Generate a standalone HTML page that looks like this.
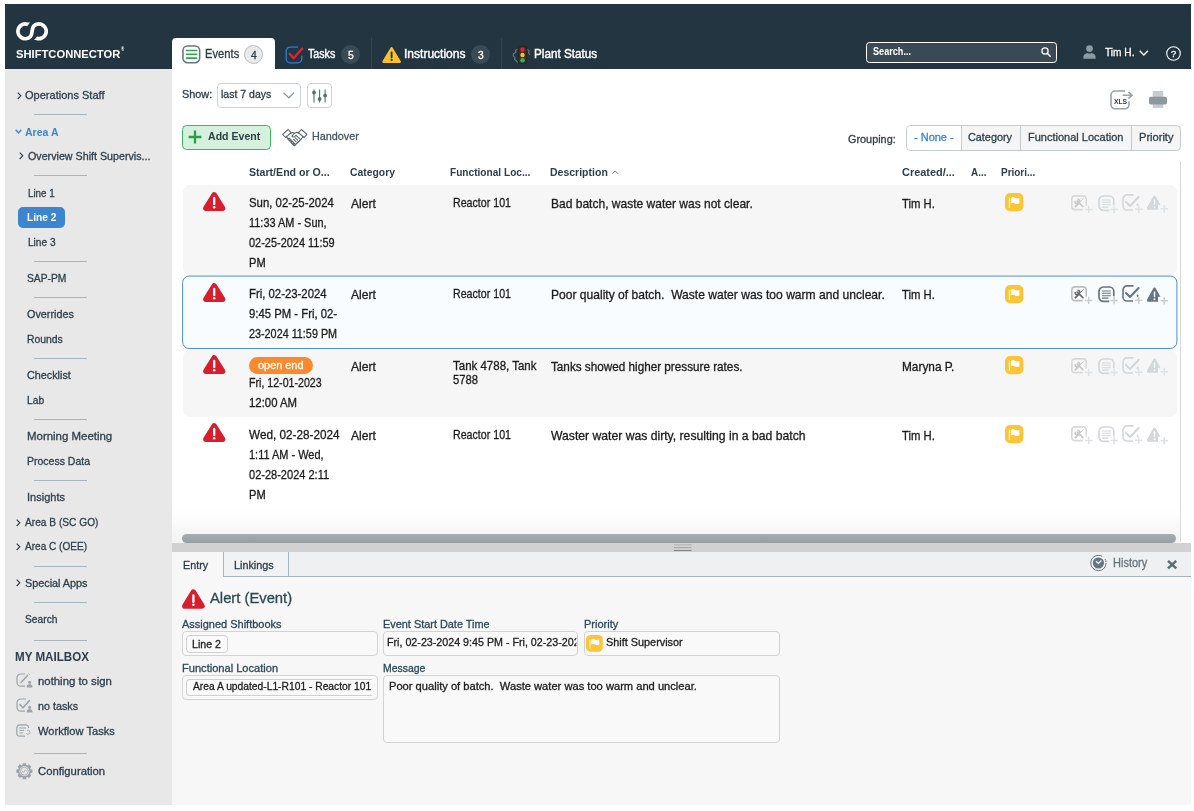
<!DOCTYPE html>
<html lang="en"><head><meta charset="utf-8"><title>Shiftconnector</title>
<style>
*{box-sizing:border-box;margin:0;padding:0}
html,body{width:1194px;height:811px;overflow:hidden;background:#fff}
body{font-family:"Liberation Sans",sans-serif;position:relative;color:#2c3e4a}
.a{position:absolute}
.t{position:absolute;white-space:nowrap;display:inline-block;transform-origin:0 50%;-webkit-text-stroke:0.3px currentColor}
svg{position:absolute;overflow:visible}
#hdr{left:5px;top:4px;width:1186px;height:64.5px;background:#223540}
#side{left:5px;top:68.5px;width:167.2px;height:736.5px;background:#e8e8e8}
.sep{position:absolute;left:34px;width:52.5px;height:1px;background:#a9b5bd}
#tabEv{left:172.2px;top:38px;width:102.8px;height:31px;background:#fff;border-radius:4px 4px 0 0}
.hsep{position:absolute;top:38px;width:1px;height:30.5px;background:#33464f}
.badge{position:absolute;width:19px;height:19px;border-radius:50%}
#srch{left:865.5px;top:42px;width:191px;height:20.5px;border:1px solid #fff;border-radius:3.5px;background:#3a4a54}
.btn{position:absolute;border:1px solid #c9cfd3;border-radius:4px;background:#fff}
.row{position:absolute;left:183px;width:994px;border-radius:7px}
.fld{position:absolute;border:1px solid #d3d3d3;border-radius:4px;background:#f9f9f9}
.chip{position:absolute;border:1px solid #d0d0d0;border-radius:4px;background:#fafafa}
#texts{position:absolute;left:0;top:0;width:1194px;height:811px;will-change:transform}

</style></head>
<body>
<div class="a" id="hdr"></div>
<div class="a" id="side"></div>
<!-- logo -->
<svg style="left:15.8px;top:21.5px" width="32.2" height="18.6" viewBox="0 0 32.2 18.6"><path d="M11.93 2.44A7.35 7.35 0 1 0 14.50 14.50C16.90 12.09 15.30 6.51 17.70 4.10A7.35 7.35 0 1 1 20.27 16.16" fill="none" stroke="#fff" stroke-width="3.8"/><path d="M10.95 4.21L12.16 0.50L14.10 0.50Z" fill="#fff"/><path d="M21.25 14.39L20.04 18.10L18.10 18.10Z" fill="#fff"/></svg>
<!-- header tabs -->
<div class="a" id="tabEv"></div>
<svg style="left:182.3px;top:45.1px" width="18.6" height="18.6" viewBox="0 0 18 18"><rect x="0.9" y="0.9" width="16.2" height="16.2" rx="4.4" fill="#fff" stroke="#687681" stroke-width="1.5"/><g stroke="#2fa84f" stroke-width="1.6" stroke-linecap="round"><path d="M4.4 5.3H14.2M4.4 9H14.2M4.4 12.7H14.2"/></g></svg>
<div class="badge" style="left:244.2px;top:44.7px;background:#e9e9e9;border:1px solid #b9bfc3"></div>
<svg style="left:285px;top:45.5px" width="19" height="18" viewBox="0 0 19 18"><path d="M13 1.2H5.2A4 4 0 0 0 1.2 5.2V12.8A4 4 0 0 0 5.2 16.8H12.8A4 4 0 0 0 16.8 12.8V9.5" fill="none" stroke="#2f7fd1" stroke-width="1.3"/><path d="M4.6 7.8L8.6 12.2L17.2 2.6" fill="none" stroke="#e0202f" stroke-width="2.4" stroke-linejoin="round" stroke-linecap="round"/></svg>
<div class="badge" style="left:341px;top:44.7px;background:#3b4b56"></div>
<div class="hsep" style="left:371px"></div>
<svg style="left:381.6px;top:46.6px" width="19.2" height="16" viewBox="0 0 19.5 16.5"><path d="M9.75 1.2L18.3 15.3H1.2Z" fill="#f9c22e" stroke="#f9c22e" stroke-width="2.2" stroke-linejoin="round"/><path d="M9.75 5.6V10.6" stroke="#223540" stroke-width="1.9" stroke-linecap="round"/><circle cx="9.75" cy="13.3" r="1.15" fill="#223540"/></svg>
<div class="badge" style="left:471.2px;top:44.7px;background:#3b4b56"></div>
<div class="hsep" style="left:501px"></div>
<svg style="left:512px;top:46px" width="19" height="18" viewBox="0 0 19 18"><path d="M5.5 3.2L3.6 4.2L3.9 6.4L1.6 7.4L1.2 9.8L3 11.4L2.6 13.6L4.6 15L5.8 16.6M15.2 3.4L17 4.6L16.6 6.8L17.8 8.6" fill="none" stroke="#6b7a84" stroke-width="1.1"/><rect x="6.3" y="0.4" width="8.4" height="17.2" rx="1.2" fill="#3a2f2c" stroke="#1d1d1d" stroke-width="0.5"/><circle cx="10.5" cy="3.8" r="2.2" fill="#e8212e"/><circle cx="10.5" cy="9" r="2.2" fill="#f7c325"/><circle cx="10.5" cy="14.2" r="2.3" fill="#2fb457"/></svg>
<!-- search -->
<div class="a" id="srch"></div>
<svg style="left:1041.3px;top:46.6px" width="11" height="11" viewBox="0 0 11 11"><circle cx="4" cy="4" r="3.1" fill="none" stroke="#fff" stroke-width="1.25"/><path d="M6.4 6.4L9.2 9.2" stroke="#fff" stroke-width="1.5" stroke-linecap="round"/></svg>
<svg style="left:1083.1px;top:45px" width="13" height="14" viewBox="0 0 13 14"><circle cx="6.5" cy="3.6" r="3.4" fill="#8b9aa4"/><path d="M0.4 13.8V11.6C0.4 9.4 2.6 8.2 4.4 7.9C5.6 8.7 7.4 8.7 8.6 7.9C10.4 8.2 12.6 9.4 12.6 11.6V13.8Z" fill="#8b9aa4"/></svg>
<svg style="left:1139.2px;top:50.4px" width="10" height="6" viewBox="0 0 10 6"><path d="M0.7 0.7L4.8 5L9 0.7" fill="none" stroke="#fff" stroke-width="1.4"/></svg>
<svg style="left:1166px;top:45.5px" width="15" height="15" viewBox="0 0 15 15"><circle cx="7.5" cy="7.5" r="6.8" fill="none" stroke="#fff" stroke-width="1.1"/></svg>
<!-- export icons -->
<svg style="left:1110.3px;top:89.7px" width="23" height="20" viewBox="0 0 23 20"><path d="M15 1H5.2A4.2 4.2 0 0 0 1 5.2V14.6A4.2 4.2 0 0 0 5.2 18.8H14.8A4.2 4.2 0 0 0 19 14.6V11.2" fill="none" stroke="#98a3ab" stroke-width="1.6"/><path d="M12.6 5.2H21.4M18.4 1.8L22 5.2L18.4 8.6" fill="none" stroke="#98a3ab" stroke-width="1.6"/></svg>
<svg style="left:1148.8px;top:90.7px" width="18" height="17.2" viewBox="0 0 18 17.2"><rect x="3.7" y="0" width="10.6" height="17.1" fill="#c5cdd1"/><rect x="0" y="5.7" width="18" height="7.8" rx="1.8" fill="#8b989f"/></svg>
<!-- toolbar -->
<div class="btn" style="left:217px;top:83.2px;width:83.6px;height:25px;border-color:#cfd3d6"></div>
<svg style="left:283px;top:92px" width="12" height="7" viewBox="0 0 12 7"><path d="M0.6 0.8L5.8 5.8L11 0.8" fill="none" stroke="#8b989f" stroke-width="1.2"/></svg>
<div class="btn" style="left:307.2px;top:83.2px;width:24.8px;height:25px;border-color:#cfd3d6"></div>
<svg style="left:312px;top:89px" width="15" height="14" viewBox="0 0 15 14"><g stroke="#5b6b75" stroke-width="1.1"><path d="M2 0.4V13.4M7.6 0.4V13.4M13.1 0.4V13.4"/></g><g fill="#5b6b75"><circle cx="2" cy="3.6" r="1.9"/><circle cx="7.6" cy="10" r="1.9"/><circle cx="13.1" cy="6.6" r="1.9"/></g></svg>
<div class="btn" style="left:182.4px;top:125px;width:88.2px;height:24.6px;background:#d5f0dc;border-color:#3db65f;border-radius:4.5px"></div>
<svg style="left:188.3px;top:129.8px" width="14" height="14" viewBox="0 0 14 14"><path d="M7 0.6V13.4M0.6 7H13.4" stroke="#27a045" stroke-width="2.3"/></svg>
<svg style="left:282px;top:127.5px" width="26" height="19" viewBox="0 0 26 19"><g fill="none" stroke="#56646e" stroke-width="1.05" stroke-linejoin="round" stroke-linecap="round"><path d="M0.6 6.4L6.2 1.5L9.2 4.6L3.6 9.5Z"/><path d="M19.4 1.5L25 6.4L22 9.5L16.4 4.6Z"/><path d="M8 5.6L10.6 4.4L12.6 5.2"/><path d="M17.2 5.4L14.6 4.2L12.4 5.4L9.8 8.2C10.6 9.4 12 9.2 13.2 8L14 7.4L18.6 11.6"/><path d="M4.6 9L6 10.6"/><path d="M21 8.8L18.8 11.6L12.4 17.6"/><path d="M5.9 11.2L7.2 10L8.4 11.3L7.1 12.5ZM7.6 13L9 11.7L10.2 13L8.8 14.3ZM9.3 14.8L10.7 13.5L11.9 14.8L10.5 16.1ZM11 16.6L12.3 15.4L13.4 16.6L12.2 17.8Z"/><path d="M13.4 16.4L14.6 15.4M15 15L16.2 14M16.6 13.6L17.8 12.6"/><path d="M13 9.6L15.6 12.2M11.6 11.2L14 13.6"/></g></svg>
<!-- grouping -->
<div class="btn" style="left:906px;top:125px;width:274.8px;height:26.4px;background:#f5f5f5;border-color:#c3cbd0;border-radius:4.5px"></div>
<div class="a" style="left:907px;top:126px;width:53.5px;height:24.4px;background:#fff;border-radius:3.5px 0 0 3.5px"></div>
<div class="a" style="left:960.5px;top:126px;width:1px;height:24.4px;background:#c3cbd0"></div>
<div class="a" style="left:1020px;top:126px;width:1px;height:24.4px;background:#c3cbd0"></div>
<div class="a" style="left:1131px;top:126px;width:1px;height:24.4px;background:#c3cbd0"></div>
<!-- list right border -->
<div class="a" style="left:1180.2px;top:161px;width:1px;height:381px;background:#d9d9d9"></div>
<!-- rows -->
<div class="row" style="top:185px;height:89.5px;background:#f6f6f6"></div>
<div class="row" style="top:350px;height:67px;background:#f6f6f6"></div>
<svg style="left:0;top:0" width="1194" height="360" viewBox="0 0 1194 360"><rect x="182.6" y="276.05" width="994.3" height="72.45" rx="6.5" fill="#f8fcfe" stroke="#4a8fd3" stroke-width="1"/></svg>
<!-- shadow above scrollbar -->
<div class="a" style="left:172.2px;top:506px;width:1008px;height:37px;background:linear-gradient(#fff,#fdfdfd 30%,#f5f5f5 78%,#f4f4f4)"></div>
<!-- splitter + bottom panel -->
<div class="a" style="left:172.2px;top:543px;width:1018.6px;height:262px;background:#f7f7f7"></div>
<div class="a" style="left:172.2px;top:543px;width:1018.6px;height:9px;background:#d1d1d1"></div>
<div class="a" style="left:182px;top:534px;width:994.2px;height:9px;border-radius:4.5px;background:linear-gradient(#a6adb0,#979fa3)"></div>
<svg style="left:673.5px;top:544px" width="17.5" height="8" viewBox="0 0 17.5 8"><path d="M0 0.8H17.5" stroke="#b4b4b4" stroke-width="1"/><path d="M0 3.6H17.5" stroke="#a3a3a3" stroke-width="1"/><path d="M0 6.5H17.5" stroke="#858585" stroke-width="1"/></svg>
<div class="a" style="left:172.2px;top:552px;width:1018.6px;height:25px;background:#eef0f1;border-bottom:1px solid #a9b5bd"></div>
<div class="a" style="left:172.2px;top:552px;width:51.8px;height:25px;background:#f7f7f7;border-right:1px solid #a9b5bd"></div>
<div class="a" style="left:224px;top:552px;width:64.5px;height:24px;background:#f1f2f3;border-right:1px solid #a9b5bd"></div>
<!-- history -->
<svg style="left:1090.3px;top:554.7px" width="17" height="16" viewBox="0 0 17 16"><circle cx="8.4" cy="8" r="7.7" fill="none" stroke="#66757f" stroke-width="1" stroke-dasharray="40 4 3 3"/><circle cx="8.4" cy="8" r="5.6" fill="#66757f"/><path d="M6 6.2L8.4 8.4L11.4 5.6" fill="none" stroke="#eef0f1" stroke-width="1.4"/></svg>
<svg style="left:1166.6px;top:559.9px" width="10.2" height="9.2" viewBox="0 0 10.2 9.2"><path d="M1 0.8L9.2 8.4M9.2 0.8L1 8.4" stroke="#5b6b75" stroke-width="2.5"/></svg>
<!-- fields -->
<div class="fld" style="left:182.2px;top:631.2px;width:195.6px;height:25.2px"></div>
<div class="chip" style="left:186px;top:635.3px;width:41.6px;height:17.5px"></div>
<div class="fld" style="left:383.1px;top:631.2px;width:195.2px;height:25.2px"></div>
<div class="fld" style="left:584.1px;top:631.2px;width:195.5px;height:25.2px"></div>
<div class="fld" style="left:182.2px;top:675.3px;width:195.6px;height:25px"></div>
<div class="chip" style="left:186px;top:679.3px;width:186.4px;height:17.2px;border-right:0;border-radius:4px 0 0 4px"></div>
<div class="fld" style="left:383.1px;top:675.3px;width:396.5px;height:68px"></div>
<div class="sep" style="top:114.1px"></div>
<div class="sep" style="top:174.7px"></div>
<div class="sep" style="top:260.8px"></div>
<div class="sep" style="top:297.4px"></div>
<div class="sep" style="top:358.0px"></div>
<div class="sep" style="top:419.3px"></div>
<div class="sep" style="top:479.9px"></div>
<div class="sep" style="top:566.0px"></div>
<div class="sep" style="top:602.4px"></div>
<div class="sep" style="top:639.5px"></div>
<div class="sep" style="top:752.9px"></div>
<div class="a" style="left:17.5px;top:206.9px;width:47px;height:21.1px;border-radius:5px;background:#3b86cf"></div>
<svg style="left:16.7px;top:91.7px" width="4.6" height="7.6" viewBox="0 0 4.6 7.6"><path d="M0.7 0.6L3.8 3.8L0.7 7" fill="none" stroke="#2c3e4a" stroke-width="1.15"/></svg>
<svg style="left:14.9px;top:129.1px" width="7" height="5" viewBox="0 0 7 5"><path d="M0.7 0.8L3.5 3.9L6.3 0.8" fill="none" stroke="#3b86cf" stroke-width="1.4"/></svg>
<svg style="left:19.3px;top:152.1px" width="4.6" height="7.6" viewBox="0 0 4.6 7.6"><path d="M0.7 0.6L3.8 3.8L0.7 7" fill="none" stroke="#2c3e4a" stroke-width="1.15"/></svg>
<svg style="left:16.0px;top:518.5px" width="4.6" height="7.6" viewBox="0 0 4.6 7.6"><path d="M0.7 0.6L3.8 3.8L0.7 7" fill="none" stroke="#2c3e4a" stroke-width="1.15"/></svg>
<svg style="left:16.0px;top:543.1px" width="4.6" height="7.6" viewBox="0 0 4.6 7.6"><path d="M0.7 0.6L3.8 3.8L0.7 7" fill="none" stroke="#2c3e4a" stroke-width="1.15"/></svg>
<svg style="left:16.0px;top:579.4px" width="4.6" height="7.6" viewBox="0 0 4.6 7.6"><path d="M0.7 0.6L3.8 3.8L0.7 7" fill="none" stroke="#2c3e4a" stroke-width="1.15"/></svg>
<svg style="left:15.8px;top:673px" width="17" height="15" viewBox="0 0 17 15"><path d="M9 1H4.6A3.6 3.6 0 0 0 1 4.6V9.6A3.6 3.6 0 0 0 4.6 13.2H9" fill="none" stroke="#9aa4ab" stroke-width="1.2"/><path d="M5 9.6L11.6 2.4" stroke="#9aa4ab" stroke-width="1.5" stroke-linecap="round"/><path d="M12.6 0.6L13.6 1.6" stroke="#9aa4ab" stroke-width="1" /><circle cx="13.6" cy="9.2" r="1.5" fill="#9aa4ab"/><path d="M10.8 14.4V13.2C10.8 11.8 12.2 11.3 13.6 11.3C15 11.3 16.4 11.8 16.4 13.2V14.4Z" fill="#9aa4ab"/></svg>
<svg style="left:15.8px;top:698px" width="17" height="15" viewBox="0 0 17 15"><path d="M10 1H4.6A3.6 3.6 0 0 0 1 4.6V9.6A3.6 3.6 0 0 0 4.6 13.2H9" fill="none" stroke="#9aa4ab" stroke-width="1.2"/><path d="M4 6.6L7 9.8L13.4 2.6" fill="none" stroke="#9aa4ab" stroke-width="1.6" stroke-linecap="round" stroke-linejoin="round"/><circle cx="13.6" cy="9.2" r="1.5" fill="#9aa4ab"/><path d="M10.8 14.4V13.2C10.8 11.8 12.2 11.3 13.6 11.3C15 11.3 16.4 11.8 16.4 13.2V14.4Z" fill="#9aa4ab"/></svg>
<svg style="left:15.8px;top:724px" width="16" height="14" viewBox="0 0 16 14"><path d="M12.6 4V3.8A3 3 0 0 0 9.6 0.8H4A3.2 3.2 0 0 0 0.8 4V9A3.2 3.2 0 0 0 4 12.2H9" fill="none" stroke="#9aa4ab" stroke-width="1.2"/><path d="M3.4 4H10M3.4 6.5H8M3.4 9H7" stroke="#9aa4ab" stroke-width="1.1"/><path d="M10.4 9.4A2 2 0 1 0 11 6.4" fill="none" stroke="#9aa4ab" stroke-width="0.9"/></svg>
<svg style="left:15.6px;top:762.8px" width="17" height="17" viewBox="0 0 17 17"><path d="M6.77 0.16L10.03 0.16L10.41 2.12L11.27 2.48L12.93 1.37L15.23 3.67L14.12 5.33L14.48 6.19L16.44 6.57L16.44 9.83L14.48 10.21L14.12 11.07L15.23 12.73L12.93 15.03L11.27 13.92L10.41 14.28L10.03 16.24L6.77 16.24L6.39 14.28L5.53 13.92L3.87 15.03L1.57 12.73L2.68 11.07L2.32 10.21L0.36 9.83L0.36 6.57L2.32 6.19L2.68 5.33L1.57 3.67L3.87 1.37L5.53 2.48L6.39 2.12Z" fill="#9aa4ab"/><circle cx="8.4" cy="8.2" r="4.9" fill="#e8e8e8"/><circle cx="8.4" cy="8.2" r="3.9" fill="none" stroke="#9aa4ab" stroke-width="0.8"/><path d="M6.4 8.2a1 1 0 1 0 2 0a1 1 0 1 1 2 0" fill="none" stroke="#9aa4ab" stroke-width="0.8"/></svg>
<svg style="left:612.3px;top:169.8px" width="6.4" height="4.2" viewBox="0 0 6.4 4.2"><path d="M0.5 3.7L3.2 0.8L5.9 3.7" fill="none" stroke="#7a8790" stroke-width="1"/></svg>
<svg style="left:202.9px;top:191.5px" width="22.4" height="19.2" viewBox="0 0 22.4 19.2"><path d="M11.2 2.9L19.5 16.3H2.9Z" fill="#d81e2c" stroke="#d81e2c" stroke-width="5.6" stroke-linejoin="round"/><path d="M11.2 6V12.2" stroke="#fff" stroke-width="2.3" stroke-linecap="round"/><circle cx="11.2" cy="15.2" r="1.25" fill="#fff"/></svg>
<svg style="left:1005.3px;top:193.3px" width="18.3" height="18.3" viewBox="0 0 18.3 18.3"><rect x="0" y="0" width="18.3" height="18.3" rx="5" fill="#fcc437"/><path d="M4.35 5V14.6" stroke="#fff" stroke-width="1" stroke-linecap="round"/><path d="M5.9 4.9C7.4 3.7 8.8 4 10 4.8C11.4 5.7 12.8 5.6 14.4 5V10.6C12.8 11.3 11.4 11.3 10 10.4C8.8 9.6 7.4 9.4 5.9 10.4Z" fill="#fff"/></svg>
<svg style="left:1070.5px;top:194.8px" width="22" height="19" viewBox="0 0 22 19"><rect x="0.85" y="0.85" width="14.4" height="13.8" rx="3.2" fill="none" stroke="#d9d9d9" stroke-width="1.6"/><rect x="11.7" y="10.7" width="10" height="9" fill="#f6f6f6"/><path d="M6.2 6.2L11.9 11.7" stroke="#c8c8c8" stroke-width="1.7" stroke-linecap="round"/><path d="M6.9 4.1A2.3 2.3 0 1 1 4.3 6.7" fill="none" stroke="#c8c8c8" stroke-width="1.5" stroke-linecap="round" transform="rotate(8 5.4 5.4)"/><path d="M12.2 3.6L8.6 7.4" stroke="#c8c8c8" stroke-width="1" stroke-linecap="round"/><path d="M7.6 8.4L4.5 11.6" stroke="#c8c8c8" stroke-width="2" stroke-linecap="round"/><path d="M14.0 14.4H21.4M17.7 10.7V18.1" stroke="#dfe2e4" stroke-width="1.5" fill="none"/></svg>
<svg style="left:1098.1px;top:194.8px" width="22" height="19" viewBox="0 0 22 19"><rect x="1" y="1" width="14.8" height="14.4" rx="4.4" fill="none" stroke="#d3d7da" stroke-width="1.7"/><rect x="11.3" y="10.3" width="10" height="9" fill="#f6f6f6"/><path d="M4 4.9H12.8M4 7.3H12.8M4 9.7H12.8M4 12.1H10.5" stroke="#d3d7da" stroke-width="1.05"/><path d="M12.400000000000002 14.5H19.8M16.1 10.8V18.2" stroke="#dfe2e4" stroke-width="1.5" fill="none"/></svg>
<svg style="left:1122.2px;top:193.8px" width="22" height="20" viewBox="0 0 22 20"><path d="M11.5 0.9H5A4 4 0 0 0 1 4.9V12A4 4 0 0 0 5 16H11" fill="none" stroke="#d3d7da" stroke-width="1.6"/><path d="M4 8L8 12L16.6 3" fill="none" stroke="#d3d7da" stroke-width="2.1" stroke-linecap="round" stroke-linejoin="round"/><path d="M15.6 10.2V11.2" stroke="#d3d7da" stroke-width="1.6" stroke-linecap="round"/><path d="M13.0 15.2H20.4M16.7 11.5V18.9" stroke="#dfe2e4" stroke-width="1.5" fill="none"/></svg>
<svg style="left:1146.6px;top:195.20000000000002px" width="22" height="19" viewBox="0 0 22 19"><path d="M7.5 2.1L13.6 13.2H1.4Z" fill="#d3d7da" stroke="#d3d7da" stroke-width="3" stroke-linejoin="round"/><rect x="11" y="9.8" width="10" height="9" fill="#f6f6f6"/><path d="M7.5 5V9.4" stroke="#f6f6f6" stroke-width="1.5" stroke-linecap="round"/><circle cx="7.5" cy="12.2" r="0.95" fill="#f6f6f6"/><path d="M13.5 13.7H20.9M17.2 10.0V17.4" stroke="#dfe2e4" stroke-width="1.5" fill="none"/></svg>
<svg style="left:202.9px;top:283.2px" width="22.4" height="19.2" viewBox="0 0 22.4 19.2"><path d="M11.2 2.9L19.5 16.3H2.9Z" fill="#d81e2c" stroke="#d81e2c" stroke-width="5.6" stroke-linejoin="round"/><path d="M11.2 6V12.2" stroke="#fff" stroke-width="2.3" stroke-linecap="round"/><circle cx="11.2" cy="15.2" r="1.25" fill="#fff"/></svg>
<svg style="left:1005.3px;top:285.0px" width="18.3" height="18.3" viewBox="0 0 18.3 18.3"><rect x="0" y="0" width="18.3" height="18.3" rx="5" fill="#fcc437"/><path d="M4.35 5V14.6" stroke="#fff" stroke-width="1" stroke-linecap="round"/><path d="M5.9 4.9C7.4 3.7 8.8 4 10 4.8C11.4 5.7 12.8 5.6 14.4 5V10.6C12.8 11.3 11.4 11.3 10 10.4C8.8 9.6 7.4 9.4 5.9 10.4Z" fill="#fff"/></svg>
<svg style="left:1070.5px;top:286.2px" width="22" height="19" viewBox="0 0 22 19"><rect x="0.85" y="0.85" width="14.4" height="13.8" rx="3.2" fill="none" stroke="#bdbdbd" stroke-width="1.6"/><rect x="11.7" y="10.7" width="10" height="9" fill="#f8fcfe"/><path d="M6.2 6.2L11.9 11.7" stroke="#6b6b6b" stroke-width="1.7" stroke-linecap="round"/><path d="M6.9 4.1A2.3 2.3 0 1 1 4.3 6.7" fill="none" stroke="#6b6b6b" stroke-width="1.5" stroke-linecap="round" transform="rotate(8 5.4 5.4)"/><path d="M12.2 3.6L8.6 7.4" stroke="#6b6b6b" stroke-width="1" stroke-linecap="round"/><path d="M7.6 8.4L4.5 11.6" stroke="#6b6b6b" stroke-width="2" stroke-linecap="round"/><path d="M14.0 14.4H21.4M17.7 10.7V18.1" stroke="#c9ced2" stroke-width="1.5" fill="none"/></svg>
<svg style="left:1098.1px;top:286.2px" width="22" height="19" viewBox="0 0 22 19"><rect x="1" y="1" width="14.8" height="14.4" rx="4.4" fill="none" stroke="#66757f" stroke-width="1.7"/><rect x="11.3" y="10.3" width="10" height="9" fill="#f8fcfe"/><path d="M4 4.9H12.8M4 7.3H12.8M4 9.7H12.8M4 12.1H10.5" stroke="#66757f" stroke-width="1.05"/><path d="M12.400000000000002 14.5H19.8M16.1 10.8V18.2" stroke="#c9ced2" stroke-width="1.5" fill="none"/></svg>
<svg style="left:1122.2px;top:285.2px" width="22" height="20" viewBox="0 0 22 20"><path d="M11.5 0.9H5A4 4 0 0 0 1 4.9V12A4 4 0 0 0 5 16H11" fill="none" stroke="#66757f" stroke-width="1.6"/><path d="M4 8L8 12L16.6 3" fill="none" stroke="#66757f" stroke-width="2.1" stroke-linecap="round" stroke-linejoin="round"/><path d="M15.6 10.2V11.2" stroke="#66757f" stroke-width="1.6" stroke-linecap="round"/><path d="M13.0 15.2H20.4M16.7 11.5V18.9" stroke="#c9ced2" stroke-width="1.5" fill="none"/></svg>
<svg style="left:1146.6px;top:286.59999999999997px" width="22" height="19" viewBox="0 0 22 19"><path d="M7.5 2.1L13.6 13.2H1.4Z" fill="#66757f" stroke="#66757f" stroke-width="3" stroke-linejoin="round"/><rect x="11" y="9.8" width="10" height="9" fill="#f8fcfe"/><path d="M7.5 5V9.4" stroke="#f8fcfe" stroke-width="1.5" stroke-linecap="round"/><circle cx="7.5" cy="12.2" r="0.95" fill="#f8fcfe"/><path d="M13.5 13.7H20.9M17.2 10.0V17.4" stroke="#c9ced2" stroke-width="1.5" fill="none"/></svg>
<svg style="left:202.9px;top:354.5px" width="22.4" height="19.2" viewBox="0 0 22.4 19.2"><path d="M11.2 2.9L19.5 16.3H2.9Z" fill="#d81e2c" stroke="#d81e2c" stroke-width="5.6" stroke-linejoin="round"/><path d="M11.2 6V12.2" stroke="#fff" stroke-width="2.3" stroke-linecap="round"/><circle cx="11.2" cy="15.2" r="1.25" fill="#fff"/></svg>
<svg style="left:1005.3px;top:356.3px" width="18.3" height="18.3" viewBox="0 0 18.3 18.3"><rect x="0" y="0" width="18.3" height="18.3" rx="5" fill="#fcc437"/><path d="M4.35 5V14.6" stroke="#fff" stroke-width="1" stroke-linecap="round"/><path d="M5.9 4.9C7.4 3.7 8.8 4 10 4.8C11.4 5.7 12.8 5.6 14.4 5V10.6C12.8 11.3 11.4 11.3 10 10.4C8.8 9.6 7.4 9.4 5.9 10.4Z" fill="#fff"/></svg>
<svg style="left:1070.5px;top:357.8px" width="22" height="19" viewBox="0 0 22 19"><rect x="0.85" y="0.85" width="14.4" height="13.8" rx="3.2" fill="none" stroke="#d9d9d9" stroke-width="1.6"/><rect x="11.7" y="10.7" width="10" height="9" fill="#f6f6f6"/><path d="M6.2 6.2L11.9 11.7" stroke="#c8c8c8" stroke-width="1.7" stroke-linecap="round"/><path d="M6.9 4.1A2.3 2.3 0 1 1 4.3 6.7" fill="none" stroke="#c8c8c8" stroke-width="1.5" stroke-linecap="round" transform="rotate(8 5.4 5.4)"/><path d="M12.2 3.6L8.6 7.4" stroke="#c8c8c8" stroke-width="1" stroke-linecap="round"/><path d="M7.6 8.4L4.5 11.6" stroke="#c8c8c8" stroke-width="2" stroke-linecap="round"/><path d="M14.0 14.4H21.4M17.7 10.7V18.1" stroke="#dfe2e4" stroke-width="1.5" fill="none"/></svg>
<svg style="left:1098.1px;top:357.8px" width="22" height="19" viewBox="0 0 22 19"><rect x="1" y="1" width="14.8" height="14.4" rx="4.4" fill="none" stroke="#d3d7da" stroke-width="1.7"/><rect x="11.3" y="10.3" width="10" height="9" fill="#f6f6f6"/><path d="M4 4.9H12.8M4 7.3H12.8M4 9.7H12.8M4 12.1H10.5" stroke="#d3d7da" stroke-width="1.05"/><path d="M12.400000000000002 14.5H19.8M16.1 10.8V18.2" stroke="#dfe2e4" stroke-width="1.5" fill="none"/></svg>
<svg style="left:1122.2px;top:356.8px" width="22" height="20" viewBox="0 0 22 20"><path d="M11.5 0.9H5A4 4 0 0 0 1 4.9V12A4 4 0 0 0 5 16H11" fill="none" stroke="#d3d7da" stroke-width="1.6"/><path d="M4 8L8 12L16.6 3" fill="none" stroke="#d3d7da" stroke-width="2.1" stroke-linecap="round" stroke-linejoin="round"/><path d="M15.6 10.2V11.2" stroke="#d3d7da" stroke-width="1.6" stroke-linecap="round"/><path d="M13.0 15.2H20.4M16.7 11.5V18.9" stroke="#dfe2e4" stroke-width="1.5" fill="none"/></svg>
<svg style="left:1146.6px;top:358.2px" width="22" height="19" viewBox="0 0 22 19"><path d="M7.5 2.1L13.6 13.2H1.4Z" fill="#d3d7da" stroke="#d3d7da" stroke-width="3" stroke-linejoin="round"/><rect x="11" y="9.8" width="10" height="9" fill="#f6f6f6"/><path d="M7.5 5V9.4" stroke="#f6f6f6" stroke-width="1.5" stroke-linecap="round"/><circle cx="7.5" cy="12.2" r="0.95" fill="#f6f6f6"/><path d="M13.5 13.7H20.9M17.2 10.0V17.4" stroke="#dfe2e4" stroke-width="1.5" fill="none"/></svg>
<svg style="left:202.9px;top:423.0px" width="22.4" height="19.2" viewBox="0 0 22.4 19.2"><path d="M11.2 2.9L19.5 16.3H2.9Z" fill="#d81e2c" stroke="#d81e2c" stroke-width="5.6" stroke-linejoin="round"/><path d="M11.2 6V12.2" stroke="#fff" stroke-width="2.3" stroke-linecap="round"/><circle cx="11.2" cy="15.2" r="1.25" fill="#fff"/></svg>
<svg style="left:1005.3px;top:424.8px" width="18.3" height="18.3" viewBox="0 0 18.3 18.3"><rect x="0" y="0" width="18.3" height="18.3" rx="5" fill="#fcc437"/><path d="M4.35 5V14.6" stroke="#fff" stroke-width="1" stroke-linecap="round"/><path d="M5.9 4.9C7.4 3.7 8.8 4 10 4.8C11.4 5.7 12.8 5.6 14.4 5V10.6C12.8 11.3 11.4 11.3 10 10.4C8.8 9.6 7.4 9.4 5.9 10.4Z" fill="#fff"/></svg>
<svg style="left:1070.5px;top:426.3px" width="22" height="19" viewBox="0 0 22 19"><rect x="0.85" y="0.85" width="14.4" height="13.8" rx="3.2" fill="none" stroke="#d9d9d9" stroke-width="1.6"/><rect x="11.7" y="10.7" width="10" height="9" fill="#fff"/><path d="M6.2 6.2L11.9 11.7" stroke="#c8c8c8" stroke-width="1.7" stroke-linecap="round"/><path d="M6.9 4.1A2.3 2.3 0 1 1 4.3 6.7" fill="none" stroke="#c8c8c8" stroke-width="1.5" stroke-linecap="round" transform="rotate(8 5.4 5.4)"/><path d="M12.2 3.6L8.6 7.4" stroke="#c8c8c8" stroke-width="1" stroke-linecap="round"/><path d="M7.6 8.4L4.5 11.6" stroke="#c8c8c8" stroke-width="2" stroke-linecap="round"/><path d="M14.0 14.4H21.4M17.7 10.7V18.1" stroke="#dfe2e4" stroke-width="1.5" fill="none"/></svg>
<svg style="left:1098.1px;top:426.3px" width="22" height="19" viewBox="0 0 22 19"><rect x="1" y="1" width="14.8" height="14.4" rx="4.4" fill="none" stroke="#d3d7da" stroke-width="1.7"/><rect x="11.3" y="10.3" width="10" height="9" fill="#fff"/><path d="M4 4.9H12.8M4 7.3H12.8M4 9.7H12.8M4 12.1H10.5" stroke="#d3d7da" stroke-width="1.05"/><path d="M12.400000000000002 14.5H19.8M16.1 10.8V18.2" stroke="#dfe2e4" stroke-width="1.5" fill="none"/></svg>
<svg style="left:1122.2px;top:425.3px" width="22" height="20" viewBox="0 0 22 20"><path d="M11.5 0.9H5A4 4 0 0 0 1 4.9V12A4 4 0 0 0 5 16H11" fill="none" stroke="#d3d7da" stroke-width="1.6"/><path d="M4 8L8 12L16.6 3" fill="none" stroke="#d3d7da" stroke-width="2.1" stroke-linecap="round" stroke-linejoin="round"/><path d="M15.6 10.2V11.2" stroke="#d3d7da" stroke-width="1.6" stroke-linecap="round"/><path d="M13.0 15.2H20.4M16.7 11.5V18.9" stroke="#dfe2e4" stroke-width="1.5" fill="none"/></svg>
<svg style="left:1146.6px;top:426.7px" width="22" height="19" viewBox="0 0 22 19"><path d="M7.5 2.1L13.6 13.2H1.4Z" fill="#d3d7da" stroke="#d3d7da" stroke-width="3" stroke-linejoin="round"/><rect x="11" y="9.8" width="10" height="9" fill="#fff"/><path d="M7.5 5V9.4" stroke="#fff" stroke-width="1.5" stroke-linecap="round"/><circle cx="7.5" cy="12.2" r="0.95" fill="#fff"/><path d="M13.5 13.7H20.9M17.2 10.0V17.4" stroke="#dfe2e4" stroke-width="1.5" fill="none"/></svg>
<div class="a" style="left:248.9px;top:356.5px;width:63.9px;height:17.2px;border-radius:8.6px;background:#fb8a2c"></div>
<svg style="left:182.4px;top:588.8px" width="22.8" height="20.2" viewBox="0 0 22.4 19.2"><path d="M11.2 2.9L19.5 16.3H2.9Z" fill="#d81e2c" stroke="#d81e2c" stroke-width="5.6" stroke-linejoin="round"/><path d="M11.2 6V12.2" stroke="#fff" stroke-width="2.3" stroke-linecap="round"/><circle cx="11.2" cy="15.2" r="1.25" fill="#fff"/></svg>
<svg style="left:586px;top:635.2px" width="16.8" height="16.8" viewBox="0 0 18.3 18.3"><rect x="0" y="0" width="18.3" height="18.3" rx="5" fill="#fcc437"/><path d="M4.35 5V14.6" stroke="#fff" stroke-width="1" stroke-linecap="round"/><path d="M5.9 4.9C7.4 3.7 8.8 4 10 4.8C11.4 5.7 12.8 5.6 14.4 5V10.6C12.8 11.3 11.4 11.3 10 10.4C8.8 9.6 7.4 9.4 5.9 10.4Z" fill="#fff"/></svg>
<div id="texts">
<span class="t" id="t0" style="left:16px;top:45.7px;font-size:10.8px;line-height:16px;color:#ffffff;font-weight:700;-webkit-text-stroke-width:0;transform:scaleX(1.0370);">SHIFTCONNECTOR</span>
<span class="t" id="t1" style="left:121.4px;top:41.5px;font-size:4.5px;line-height:16px;color:#ffffff;font-weight:700;-webkit-text-stroke-width:0;transform:scaleX(0.9615);">®</span>
<span class="t" id="t2" style="left:204.7px;top:46.2px;font-size:12.2px;line-height:16px;color:#2c3e4a;transform:scaleX(0.9204);">Events</span>
<span class="t" id="t3" style="left:250.8px;top:47.0px;font-size:11px;line-height:16px;color:#2c3e4a;transform:scaleX(0.9469);">4</span>
<span class="t" id="t4" style="left:307.7px;top:46.2px;font-size:12.2px;line-height:16px;color:#ffffff;transform:scaleX(0.8762);-webkit-text-stroke-width:0.42px;">Tasks</span>
<span class="t" id="t5" style="left:347.5px;top:47.0px;font-size:11px;line-height:16px;color:#ffffff;transform:scaleX(0.9469);">5</span>
<span class="t" id="t6" style="left:404px;top:46.2px;font-size:12.2px;line-height:16px;color:#ffffff;transform:scaleX(0.9867);-webkit-text-stroke-width:0.42px;">Instructions</span>
<span class="t" id="t7" style="left:477.8px;top:47.0px;font-size:11px;line-height:16px;color:#ffffff;transform:scaleX(0.9306);">3</span>
<span class="t" id="t8" style="left:534.3px;top:46.2px;font-size:12.2px;line-height:16px;color:#ffffff;transform:scaleX(0.9617);-webkit-text-stroke-width:0.42px;">Plant Status</span>
<span class="t" id="t9" style="left:873px;top:43.2px;font-size:11px;line-height:16px;color:#ffffff;font-weight:700;-webkit-text-stroke-width:0;transform:scaleX(0.8286);">Search...</span>
<span class="t" id="t10" style="left:1104.9px;top:43.9px;font-size:11px;line-height:16px;color:#ffffff;transform:scaleX(0.9223);">Tim H.</span>
<span class="t" id="t11" style="left:1171px;top:45.6px;font-size:9.5px;line-height:16px;color:#ffffff;transform:scaleX(0.9817);">?</span>
<span class="t" id="t12" style="left:1114.2px;top:94.2px;font-size:7.4px;line-height:16px;color:#2f3b43;font-weight:700;-webkit-text-stroke-width:0;transform:scaleX(0.9113);">XLS</span>
<span class="t" id="t13" style="left:182.1px;top:86.0px;font-size:11px;line-height:16px;color:#2c3e4a;transform:scaleX(0.9876);">Show:</span>
<span class="t" id="t14" style="left:221px;top:86.0px;font-size:11px;line-height:16px;color:#2c3e4a;transform:scaleX(0.9564);">last 7 days</span>
<span class="t" id="t15" style="left:207.5px;top:127.5px;font-size:11px;line-height:16px;color:#2c3e4a;font-weight:700;-webkit-text-stroke-width:0;transform:scaleX(0.9613);">Add Event</span>
<span class="t" id="t16" style="left:312.4px;top:128.2px;font-size:11px;line-height:16px;color:#46565f;transform:scaleX(0.9832);">Handover</span>
<span class="t" id="t17" style="left:848.3px;top:131.0px;font-size:11px;line-height:16px;color:#2c3e4a;transform:scaleX(0.9873);">Grouping:</span>
<span class="t" id="t18" style="left:913.8px;top:128.8px;font-size:11px;line-height:16px;color:#3b86cf;transform:scaleX(0.9987);">- None -</span>
<span class="t" id="t19" style="left:968px;top:128.8px;font-size:11px;line-height:16px;color:#2c3e4a;transform:scaleX(0.9856);">Category</span>
<span class="t" id="t20" style="left:1027.5px;top:128.8px;font-size:11px;line-height:16px;color:#2c3e4a;transform:scaleX(1.0010);">Functional Location</span>
<span class="t" id="t21" style="left:1138.5px;top:128.8px;font-size:11px;line-height:16px;color:#2c3e4a;transform:scaleX(1.0078);">Priority</span>
<span class="t" id="t22" style="left:249.4px;top:163.8px;font-size:11px;line-height:16px;color:#2c3e4a;font-weight:700;-webkit-text-stroke-width:0;transform:scaleX(0.9626);">Start/End or O...</span>
<span class="t" id="t23" style="left:350px;top:163.8px;font-size:11px;line-height:16px;color:#2c3e4a;font-weight:700;-webkit-text-stroke-width:0;transform:scaleX(0.9436);">Category</span>
<span class="t" id="t24" style="left:450.4px;top:163.8px;font-size:11px;line-height:16px;color:#2c3e4a;font-weight:700;-webkit-text-stroke-width:0;transform:scaleX(0.9200);">Functional Loc...</span>
<span class="t" id="t25" style="left:550.2px;top:163.8px;font-size:11px;line-height:16px;color:#2c3e4a;font-weight:700;-webkit-text-stroke-width:0;transform:scaleX(0.9551);">Description</span>
<span class="t" id="t26" style="left:901.6px;top:163.8px;font-size:11px;line-height:16px;color:#2c3e4a;font-weight:700;-webkit-text-stroke-width:0;transform:scaleX(0.9927);">Created/...</span>
<span class="t" id="t27" style="left:971px;top:163.8px;font-size:11px;line-height:16px;color:#2c3e4a;font-weight:700;-webkit-text-stroke-width:0;transform:scaleX(0.8993);">A...</span>
<span class="t" id="t28" style="left:1000.7px;top:163.8px;font-size:11px;line-height:16px;color:#2c3e4a;font-weight:700;-webkit-text-stroke-width:0;transform:scaleX(0.9049);">Priori...</span>
<span class="t" id="t29" style="left:249.4px;top:194.7px;font-size:12.2px;line-height:16px;color:#1c1c1c;transform:scaleX(0.9338);">Sun, 02-25-2024</span>
<span class="t" id="t30" style="left:249.4px;top:214.7px;font-size:12.2px;line-height:16px;color:#1c1c1c;transform:scaleX(0.8971);">11:33 AM - Sun,</span>
<span class="t" id="t31" style="left:249.4px;top:234.7px;font-size:12.2px;line-height:16px;color:#1c1c1c;transform:scaleX(0.8980);">02-25-2024 11:59</span>
<span class="t" id="t32" style="left:249.4px;top:254.7px;font-size:12.2px;line-height:16px;color:#1c1c1c;transform:scaleX(0.9080);">PM</span>
<span class="t" id="t33" style="left:351px;top:195.7px;font-size:12.2px;line-height:16px;color:#1c1c1c;transform:scaleX(0.9975);">Alert</span>
<span class="t" id="t34" style="left:453px;top:194.9px;font-size:12.2px;line-height:16px;color:#1c1c1c;transform:scaleX(0.8734);">Reactor 101</span>
<span class="t" id="t35" style="left:551.2px;top:195.7px;font-size:12.2px;line-height:16px;color:#1c1c1c;transform:scaleX(0.9863);">Bad batch, waste water was not clear.</span>
<span class="t" id="t36" style="left:901.8px;top:195.7px;font-size:12.2px;line-height:16px;color:#1c1c1c;transform:scaleX(0.9256);">Tim H.</span>
<span class="t" id="t37" style="left:249.4px;top:285.8px;font-size:12.2px;line-height:16px;color:#1c1c1c;transform:scaleX(0.9313);">Fri, 02-23-2024</span>
<span class="t" id="t38" style="left:249.4px;top:305.8px;font-size:12.2px;line-height:16px;color:#1c1c1c;transform:scaleX(0.9290);">9:45 PM - Fri, 02-</span>
<span class="t" id="t39" style="left:249.4px;top:325.7px;font-size:12.2px;line-height:16px;color:#1c1c1c;transform:scaleX(0.8865);">23-2024 11:59 PM</span>
<span class="t" id="t40" style="left:351px;top:286.8px;font-size:12.2px;line-height:16px;color:#1c1c1c;transform:scaleX(0.9975);">Alert</span>
<span class="t" id="t41" style="left:453px;top:285.9px;font-size:12.2px;line-height:16px;color:#1c1c1c;transform:scaleX(0.8734);">Reactor 101</span>
<span class="t" id="t42" style="left:551.2px;top:286.8px;font-size:12.2px;line-height:16px;color:#1c1c1c;transform:scaleX(0.9908);">Poor quality of batch.  Waste water was too warm and unclear.</span>
<span class="t" id="t43" style="left:901.8px;top:286.8px;font-size:12.2px;line-height:16px;color:#1c1c1c;transform:scaleX(0.9256);">Tim H.</span>
<span class="t" id="t44" style="left:258.3px;top:356.8px;font-size:11px;line-height:16px;color:#ffffff;transform:scaleX(0.9915);">open end</span>
<span class="t" id="t45" style="left:249.4px;top:374.7px;font-size:12.2px;line-height:16px;color:#1c1c1c;transform:scaleX(0.8713);">Fri, 12-01-2023</span>
<span class="t" id="t46" style="left:249.4px;top:394.7px;font-size:12.2px;line-height:16px;color:#1c1c1c;transform:scaleX(0.9340);">12:00 AM</span>
<span class="t" id="t47" style="left:351px;top:359.0px;font-size:12.2px;line-height:16px;color:#1c1c1c;transform:scaleX(0.9975);">Alert</span>
<span class="t" id="t48" style="left:453px;top:357.9px;font-size:12.2px;line-height:16px;color:#1c1c1c;transform:scaleX(0.9430);">Tank 4788, Tank</span>
<span class="t" id="t49" style="left:453px;top:371.6px;font-size:12.2px;line-height:16px;color:#1c1c1c;transform:scaleX(0.9217);">5788</span>
<span class="t" id="t50" style="left:551.2px;top:359.0px;font-size:12.2px;line-height:16px;color:#1c1c1c;transform:scaleX(0.9615);">Tanks showed higher pressure rates.</span>
<span class="t" id="t51" style="left:901.8px;top:359.0px;font-size:12.2px;line-height:16px;color:#1c1c1c;transform:scaleX(0.9709);">Maryna P.</span>
<span class="t" id="t52" style="left:249.4px;top:426.8px;font-size:12.2px;line-height:16px;color:#1c1c1c;transform:scaleX(0.9643);">Wed, 02-28-2024</span>
<span class="t" id="t53" style="left:249.4px;top:446.8px;font-size:12.2px;line-height:16px;color:#1c1c1c;transform:scaleX(0.9002);">1:11 AM - Wed,</span>
<span class="t" id="t54" style="left:249.4px;top:466.8px;font-size:12.2px;line-height:16px;color:#1c1c1c;transform:scaleX(0.9046);">02-28-2024 2:11</span>
<span class="t" id="t55" style="left:249.4px;top:486.8px;font-size:12.2px;line-height:16px;color:#1c1c1c;transform:scaleX(0.9080);">PM</span>
<span class="t" id="t56" style="left:351px;top:427.7px;font-size:12.2px;line-height:16px;color:#1c1c1c;transform:scaleX(0.9975);">Alert</span>
<span class="t" id="t57" style="left:453px;top:426.8px;font-size:12.2px;line-height:16px;color:#1c1c1c;transform:scaleX(0.8734);">Reactor 101</span>
<span class="t" id="t58" style="left:551.2px;top:427.7px;font-size:12.2px;line-height:16px;color:#1c1c1c;transform:scaleX(0.9992);">Waster water was dirty, resulting in a bad batch</span>
<span class="t" id="t59" style="left:901.8px;top:427.7px;font-size:12.2px;line-height:16px;color:#1c1c1c;transform:scaleX(0.9256);">Tim H.</span>
<span class="t" id="t60" style="left:183.4px;top:557.5px;font-size:10.4px;line-height:16px;color:#2c3e4a;transform:scaleX(1.0344);">Entry</span>
<span class="t" id="t61" style="left:234.3px;top:557.5px;font-size:10.4px;line-height:16px;color:#2c3e4a;transform:scaleX(1.0387);">Linkings</span>
<span class="t" id="t62" style="left:1113px;top:555.0px;font-size:12.2px;line-height:16px;color:#66757f;transform:scaleX(0.9045);">History</span>
<span class="t" id="t63" style="left:210.2px;top:589.8px;font-size:15px;line-height:16px;color:#2c4856;transform:scaleX(0.9849);">Alert (Event)</span>
<span class="t" id="t64" style="left:182.1px;top:616.2px;font-size:11px;line-height:16px;color:#2c4856;transform:scaleX(0.9983);">Assigned Shiftbooks</span>
<span class="t" id="t65" style="left:383.4px;top:616.2px;font-size:11px;line-height:16px;color:#2c4856;transform:scaleX(0.9906);">Event Start Date Time</span>
<span class="t" id="t66" style="left:584.3px;top:615.9px;font-size:11px;line-height:16px;color:#2c4856;transform:scaleX(0.9990);">Priority</span>
<span class="t" id="t67" style="left:182.1px;top:659.7px;font-size:11px;line-height:16px;color:#2c4856;transform:scaleX(1.0073);">Functional Location</span>
<span class="t" id="t68" style="left:383.4px;top:659.7px;font-size:11px;line-height:16px;color:#2c4856;transform:scaleX(0.9498);">Message</span>
<span class="t" id="t69" style="left:192.4px;top:635.8px;font-size:11px;line-height:16px;color:#1c1c1c;transform:scaleX(0.9638);">Line 2</span>
<span class="t" id="t70" style="left:192.8px;top:678.4px;font-size:11px;line-height:16px;color:#1c1c1c;transform:scaleX(0.9340);">Area A updated-L1-R101 - Reactor 101</span>
<span class="t" id="t71" style="left:386.9px;top:634.4px;font-size:11px;line-height:16px;color:#1c1c1c;transform:scaleX(0.9725);clip-path:inset(0 9.5px 0 0);">Fri, 02-23-2024 9:45 PM - Fri, 02-23-2024</span>
<span class="t" id="t72" style="left:605.9px;top:634.4px;font-size:11px;line-height:16px;color:#1c1c1c;transform:scaleX(0.9877);">Shift Supervisor</span>
<span class="t" id="t73" style="left:388.7px;top:677.8px;font-size:11px;line-height:16px;color:#1c1c1c;transform:scaleX(1.0126);">Poor quality of batch.  Waste water was too warm and unclear.</span>
<span class="t" id="t74" style="left:25px;top:86.8px;font-size:11px;line-height:16px;color:#2c3e4a;transform:scaleX(1.0026);">Operations Staff</span>
<span class="t" id="t75" style="left:25px;top:123.8px;font-size:11px;line-height:16px;color:#3b86cf;font-weight:700;-webkit-text-stroke-width:0;transform:scaleX(0.9583);">Area A</span>
<span class="t" id="t76" style="left:27.5px;top:148.1px;font-size:11px;line-height:16px;color:#2c3e4a;transform:scaleX(0.9727);">Overview Shift Supervis...</span>
<span class="t" id="t77" style="left:27.6px;top:184.5px;font-size:11px;line-height:16px;color:#2c3e4a;transform:scaleX(0.8905);">Line 1</span>
<span class="t" id="t78" style="left:27.3px;top:209.1px;font-size:11px;line-height:16px;color:#ffffff;font-weight:700;-webkit-text-stroke-width:0;transform:scaleX(0.9278);">Line 2</span>
<span class="t" id="t79" style="left:27.6px;top:233.8px;font-size:11px;line-height:16px;color:#2c3e4a;transform:scaleX(0.9171);">Line 3</span>
<span class="t" id="t80" style="left:27.2px;top:269.8px;font-size:11px;line-height:16px;color:#2c3e4a;transform:scaleX(0.9339);">SAP-PM</span>
<span class="t" id="t81" style="left:27.2px;top:305.9px;font-size:11px;line-height:16px;color:#2c3e4a;transform:scaleX(0.9814);">Overrides</span>
<span class="t" id="t82" style="left:27.2px;top:330.5px;font-size:11px;line-height:16px;color:#2c3e4a;transform:scaleX(0.9440);">Rounds</span>
<span class="t" id="t83" style="left:27.2px;top:367.2px;font-size:11px;line-height:16px;color:#2c3e4a;transform:scaleX(0.9815);">Checklist</span>
<span class="t" id="t84" style="left:27.2px;top:391.8px;font-size:11px;line-height:16px;color:#2c3e4a;transform:scaleX(0.9369);">Lab</span>
<span class="t" id="t85" style="left:27.2px;top:427.8px;font-size:11px;line-height:16px;color:#2c3e4a;transform:scaleX(1.0398);">Morning Meeting</span>
<span class="t" id="t86" style="left:27.2px;top:453.0px;font-size:11px;line-height:16px;color:#2c3e4a;transform:scaleX(0.9541);">Process Data</span>
<span class="t" id="t87" style="left:27.3px;top:489.2px;font-size:11px;line-height:16px;color:#2c3e4a;transform:scaleX(1.0021);">Insights</span>
<span class="t" id="t88" style="left:24.5px;top:513.6px;font-size:11px;line-height:16px;color:#2c3e4a;transform:scaleX(0.9249);">Area B (SC GO)</span>
<span class="t" id="t89" style="left:24.5px;top:538.2px;font-size:11px;line-height:16px;color:#2c3e4a;transform:scaleX(0.9137);">Area C (OEE)</span>
<span class="t" id="t90" style="left:24.5px;top:574.5px;font-size:11px;line-height:16px;color:#2c3e4a;transform:scaleX(0.9826);">Special Apps</span>
<span class="t" id="t91" style="left:24.5px;top:611.2px;font-size:11px;line-height:16px;color:#2c3e4a;transform:scaleX(0.9323);">Search</span>
<span class="t" id="t92" style="left:15.4px;top:649.0px;font-size:12px;line-height:16px;color:#2c3e4a;font-weight:700;-webkit-text-stroke-width:0;transform:scaleX(0.9666);">MY MAILBOX</span>
<span class="t" id="t93" style="left:37.9px;top:672.8px;font-size:11px;line-height:16px;color:#2c3e4a;transform:scaleX(1.0327);">nothing to sign</span>
<span class="t" id="t94" style="left:37.9px;top:697.5px;font-size:11px;line-height:16px;color:#2c3e4a;transform:scaleX(0.9764);">no tasks</span>
<span class="t" id="t95" style="left:37.9px;top:723.0px;font-size:11px;line-height:16px;color:#2c3e4a;transform:scaleX(1.0116);">Workflow Tasks</span>
<span class="t" id="t96" style="left:37.9px;top:763.4px;font-size:11px;line-height:16px;color:#2c3e4a;transform:scaleX(1.0254);">Configuration</span>
</div>
</body></html>
